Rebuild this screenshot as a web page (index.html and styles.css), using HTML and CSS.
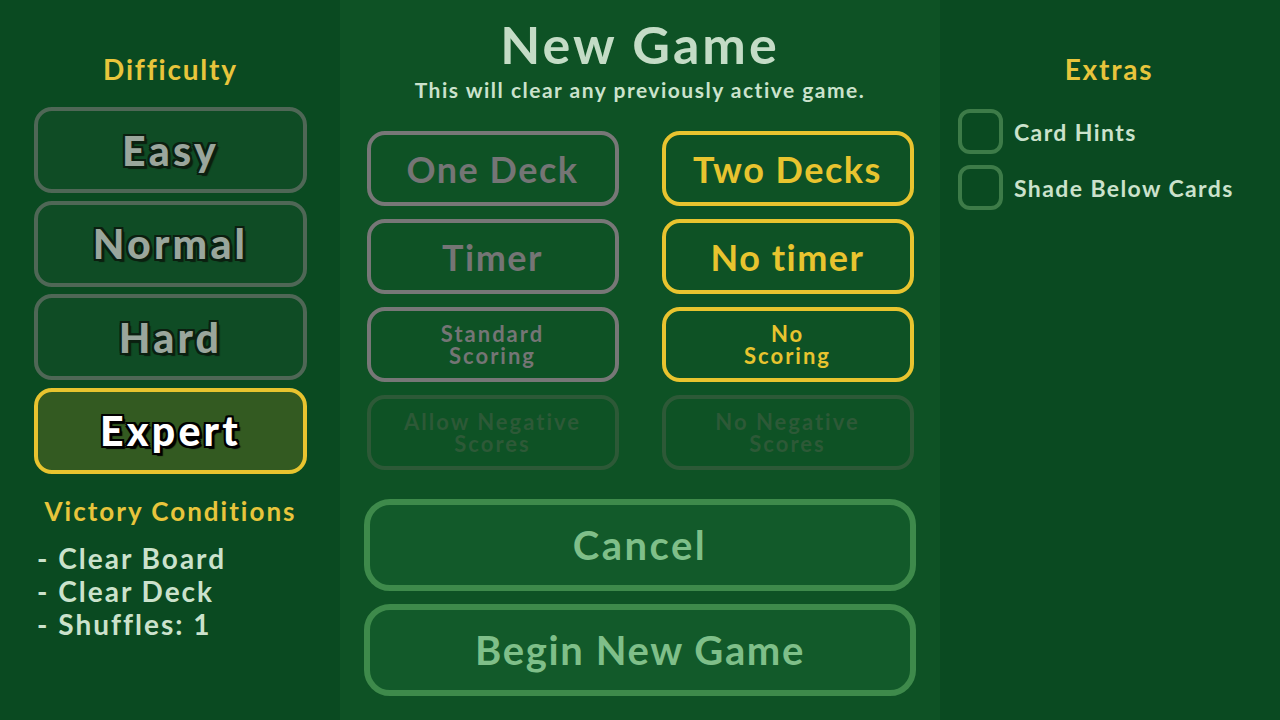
FILE: index.html
```html
<!DOCTYPE html>
<html lang="en">
<head>
<meta charset="utf-8">
<title>New Game</title>
<link rel="stylesheet" href="styles.css">
</head>
<body>
<div class="screen">
  <aside class="side left">
    <h2 class="heading">Difficulty</h2>
    <div class="diff-list">
      <div class="diff">Easy</div>
      <div class="diff">Normal</div>
      <div class="diff">Hard</div>
      <div class="diff selected">Expert</div>
    </div>
    <h3 class="subheading">Victory Conditions</h3>
    <ul class="conditions">
      <li>- Clear Board</li>
      <li>- Clear Deck</li>
      <li>- Shuffles: 1</li>
    </ul>
  </aside>

  <main class="center">
    <h1 class="title">New Game</h1>
    <p class="subtitle">This will clear any previously active game.</p>
    <div class="options">
      <div class="opt off big">One Deck</div>
      <div class="opt on big">Two Decks</div>
      <div class="opt off big">Timer</div>
      <div class="opt on big">No timer</div>
      <div class="opt off small"><span>Standard</span><span>Scoring</span></div>
      <div class="opt on small"><span>No</span><span>Scoring</span></div>
      <div class="opt dim small"><span>Allow Negative</span><span>Scores</span></div>
      <div class="opt dim small"><span>No Negative</span><span>Scores</span></div>
    </div>
    <div class="actions">
      <div class="action cancel">Cancel</div>
      <div class="action begin">Begin New Game</div>
    </div>
  </main>

  <aside class="side right">
    <h2 class="heading">Extras</h2>
    <div class="checks">
      <label class="check"><span class="box"></span><span class="check-label">Card Hints</span></label>
      <label class="check"><span class="box"></span><span class="check-label">Shade Below Cards</span></label>
    </div>
  </aside>
</div>
</body>
</html>
```

FILE: styles.css
```css
* { box-sizing: border-box; }

html, body {
  margin: 0;
  padding: 0;
  width: 1280px;
  height: 720px;
  overflow: hidden;
  background: #0a4a21;
  font-family: Lato, "Open Sans", sans-serif;
  font-weight: 700;
}

.screen {
  display: grid;
  grid-template-columns: 340px 600px 340px;
  height: 720px;
}

.side {
  background: #0a4a21;
  display: flex;
  flex-direction: column;
}

.left { padding: 0 33px 0 34px; }

.heading {
  margin: 52px 0 0;
  font-size: 28px;
  line-height: 34px;
  font-weight: 700;
  letter-spacing: 1.8px;
  color: #e8c53c;
  text-align: center;
}

.diff-list {
  margin-top: 21px;
  display: flex;
  flex-direction: column;
  gap: 7.5px;
}

.diff {
  height: 86px;
  border: 4px solid #4f6756;
  border-radius: 18px;
  background: #0f4c25;
  display: flex;
  align-items: center;
  justify-content: center;
  font-size: 41px;
  font-weight: 900;
  color: #9aa69c;
  letter-spacing: 3.2px;
  text-shadow:
    2px 0 0 #0b1f10, -2px 0 0 #0b1f10, 0 2px 0 #0b1f10, 0 -2px 0 #0b1f10,
    2px 2px 0 #0b1f10, -2px -2px 0 #0b1f10, 2px -2px 0 #0b1f10, -2px 2px 0 #0b1f10,
    3px 3px 1px #0b1f10;
}

.diff.selected {
  border-color: #e8c42f;
  background: #335a21;
  color: #ffffff;
  text-shadow:
    2px 0 0 #000, -2px 0 0 #000, 0 2px 0 #000, 0 -2px 0 #000,
    2px 2px 0 #000, -2px -2px 0 #000, 2px -2px 0 #000, -2px 2px 0 #000,
    3px 3px 1px #000;
}

.subheading {
  margin: 22px 0 0;
  font-size: 26px;
  line-height: 31px;
  font-weight: 700;
  letter-spacing: 2px;
  color: #e8c53c;
  text-align: center;
}

.conditions {
  list-style: none;
  margin: 15px 0 0;
  padding: 0 0 0 3px;
  font-size: 28px;
  line-height: 33px;
  letter-spacing: 2px;
  color: #cbe2cc;
}

.center {
  background: #0e5225;
  display: flex;
  flex-direction: column;
  align-items: center;
  padding: 0 24px;
}

.title {
  margin: 13px 0 0;
  font-size: 52px;
  line-height: 62px;
  font-weight: 700;
  letter-spacing: 3px;
  color: #c4dcc6;
}

.subtitle {
  margin: 2px 0 0;
  font-size: 21px;
  line-height: 25px;
  letter-spacing: 1.5px;
  color: #cbe2cc;
}

.options {
  margin-top: 29px;
  display: grid;
  grid-template-columns: 252px 252px;
  grid-auto-rows: 75px;
  column-gap: 43px;
  row-gap: 13px;
}

.opt {
  border: 4px solid #777;
  border-radius: 18px;
  display: flex;
  align-items: center;
  justify-content: center;
  text-align: center;
  color: #757575;
}

.opt.big { font-size: 36px; letter-spacing: 1.5px; }
.opt.small {
  flex-direction: column;
  font-size: 22px;
  line-height: 22px;
  letter-spacing: 2px;
}

.opt.on { border-color: #e8c42f; color: #e8c42f; }
.opt.dim { border-color: #2d5937; color: #2d5937; }

.actions {
  margin-top: 29px;
  width: 552px;
  display: flex;
  flex-direction: column;
  gap: 13px;
}

.action {
  height: 92px;
  border: 6px solid #3e8a4b;
  border-radius: 26px;
  background: #125a2a;
  display: flex;
  align-items: center;
  justify-content: center;
  font-size: 40px;
  color: #7fbf89;
}

.action.cancel { letter-spacing: 2.5px; }
.action.begin { letter-spacing: 1.6px; }

.right { padding: 0 20px 0 18px; }

.checks {
  margin-top: 23px;
  display: flex;
  flex-direction: column;
  gap: 11px;
}

.check {
  display: flex;
  align-items: center;
  gap: 11px;
  font-size: 23px;
  letter-spacing: 1.4px;
  color: #cbe2cc;
}

.box {
  width: 45px;
  height: 45px;
  flex: none;
  border: 4px solid #3d7b48;
  border-radius: 12px;
}
```
